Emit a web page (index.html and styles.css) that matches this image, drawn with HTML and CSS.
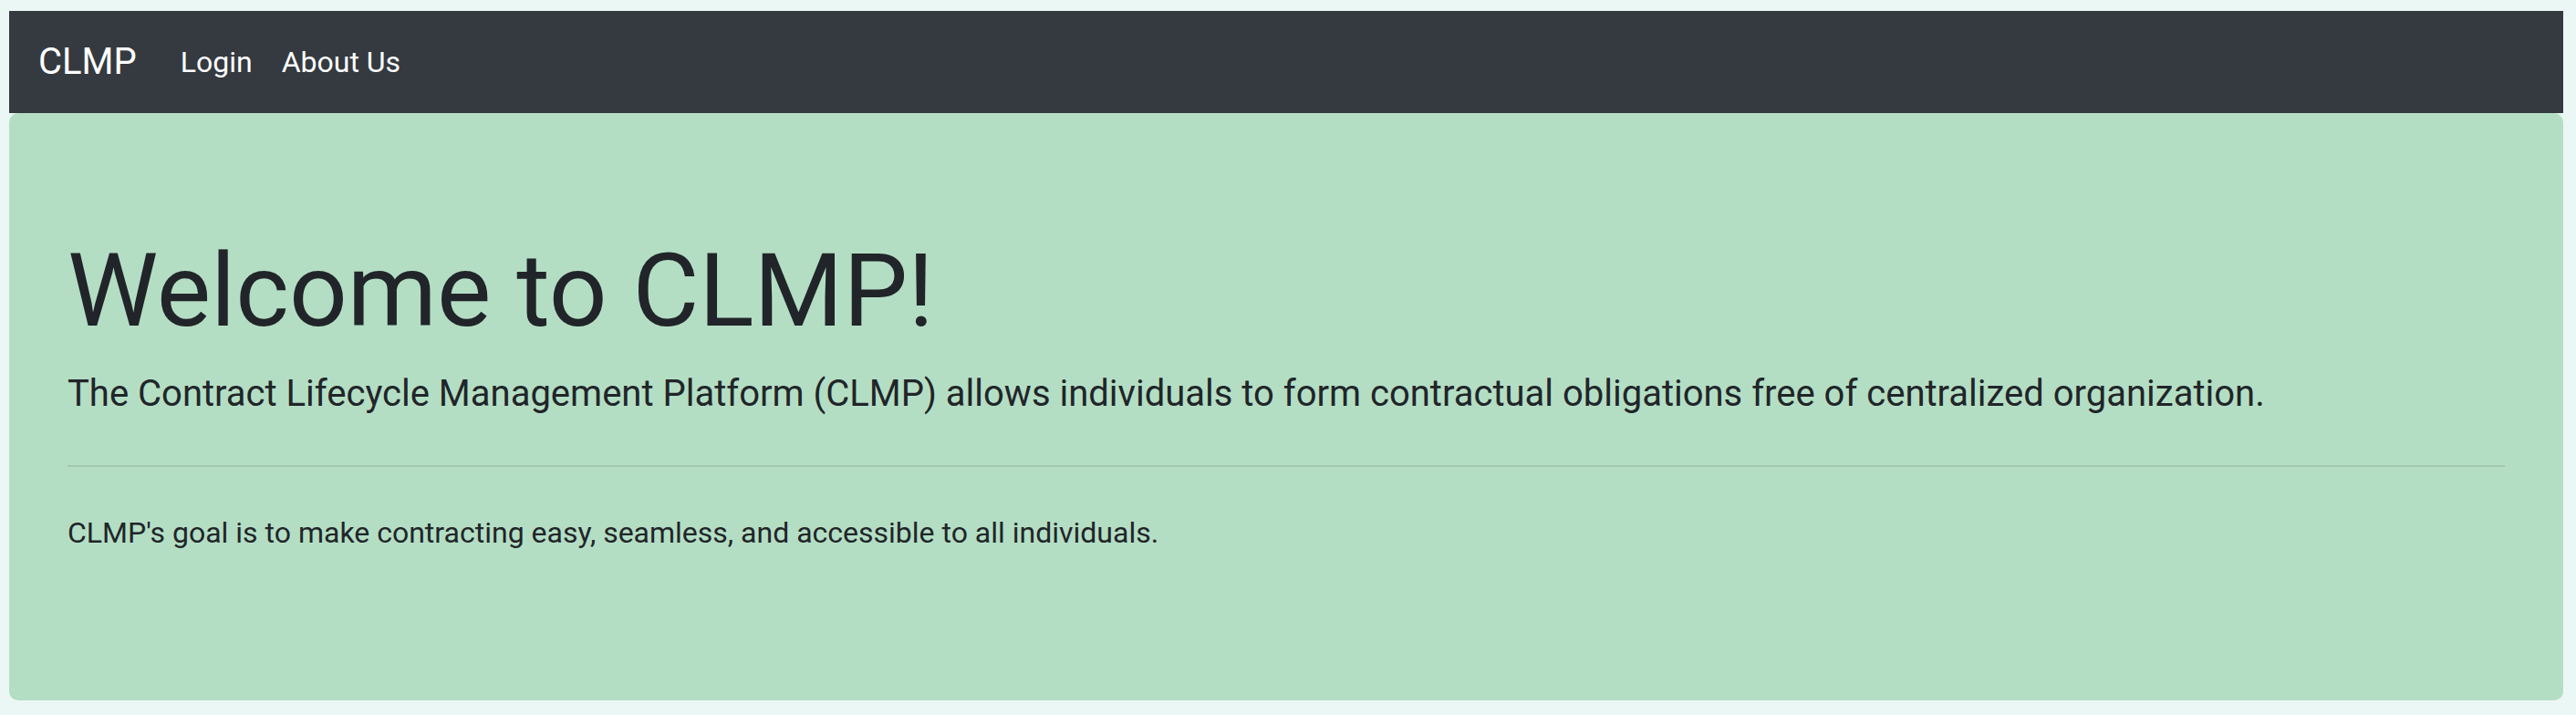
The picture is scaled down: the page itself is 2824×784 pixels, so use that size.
FILE: index.html
```html
<!DOCTYPE html>
<html lang="en">
<head>
<meta charset="utf-8">
<title>CLMP</title>
<link rel="stylesheet" href="styles.css">
</head>
<body>
<div class="page">
  <nav class="navbar">
    <a class="brand" href="#">CLMP</a>
    <ul class="nav">
      <li><a class="nav-link" href="#">Login</a></li>
      <li><a class="nav-link" href="#">About Us</a></li>
    </ul>
  </nav>
  <div class="jumbotron">
    <h1 class="display">Welcome to CLMP!</h1>
    <p class="lead">The Contract Lifecycle Management Platform (CLMP) allows individuals to form contractual obligations free of centralized organization.</p>
    <hr class="divider">
    <p class="body-text">CLMP's goal is to make contracting easy, seamless, and accessible to all individuals.</p>
  </div>
</div>
</body>
</html>
```
FILE: styles.css
```css
html, body {
  margin: 0;
  padding: 0;
  background: #ebf7f4;
  font-family: Roboto, "Liberation Sans", Arial, sans-serif;
  color: #212529;
}
.page {
  padding: 12px 14px 0 10px;
}
.navbar {
  display: flex;
  align-items: center;
  background: #343a40;
  padding: 16px 32px;
  height: 80px;
}
.brand {
  display: block;
  color: #fff;
  text-decoration: none;
  font-size: 40px;
  line-height: 60px;
  padding: 10px 0;
  margin-right: 32px;
}
.nav {
  display: flex;
  list-style: none;
  margin: 0;
  padding: 0;
}
.nav-link {
  display: block;
  color: #fff;
  text-decoration: none;
  font-size: 32px;
  line-height: 48px;
  padding: 16px 16px;
}
.jumbotron {
  background: #b4dec4;
  border-radius: 10px;
  padding: 128px 64px;
}
.display {
  margin: 0 0 16px;
  font-size: 112px;
  font-weight: 400;
  line-height: 1.2;
}
.lead {
  margin: 0 0 32px;
  font-size: 40px;
  font-weight: 400;
  line-height: 60px;
}
.divider {
  margin: 48px 0;
  border: 0;
  border-top: 2px solid rgba(0, 0, 0, 0.1);
  height: 0;
}
.body-text {
  margin: 0 0 32px;
  font-size: 32px;
  line-height: 48px;
}
```
